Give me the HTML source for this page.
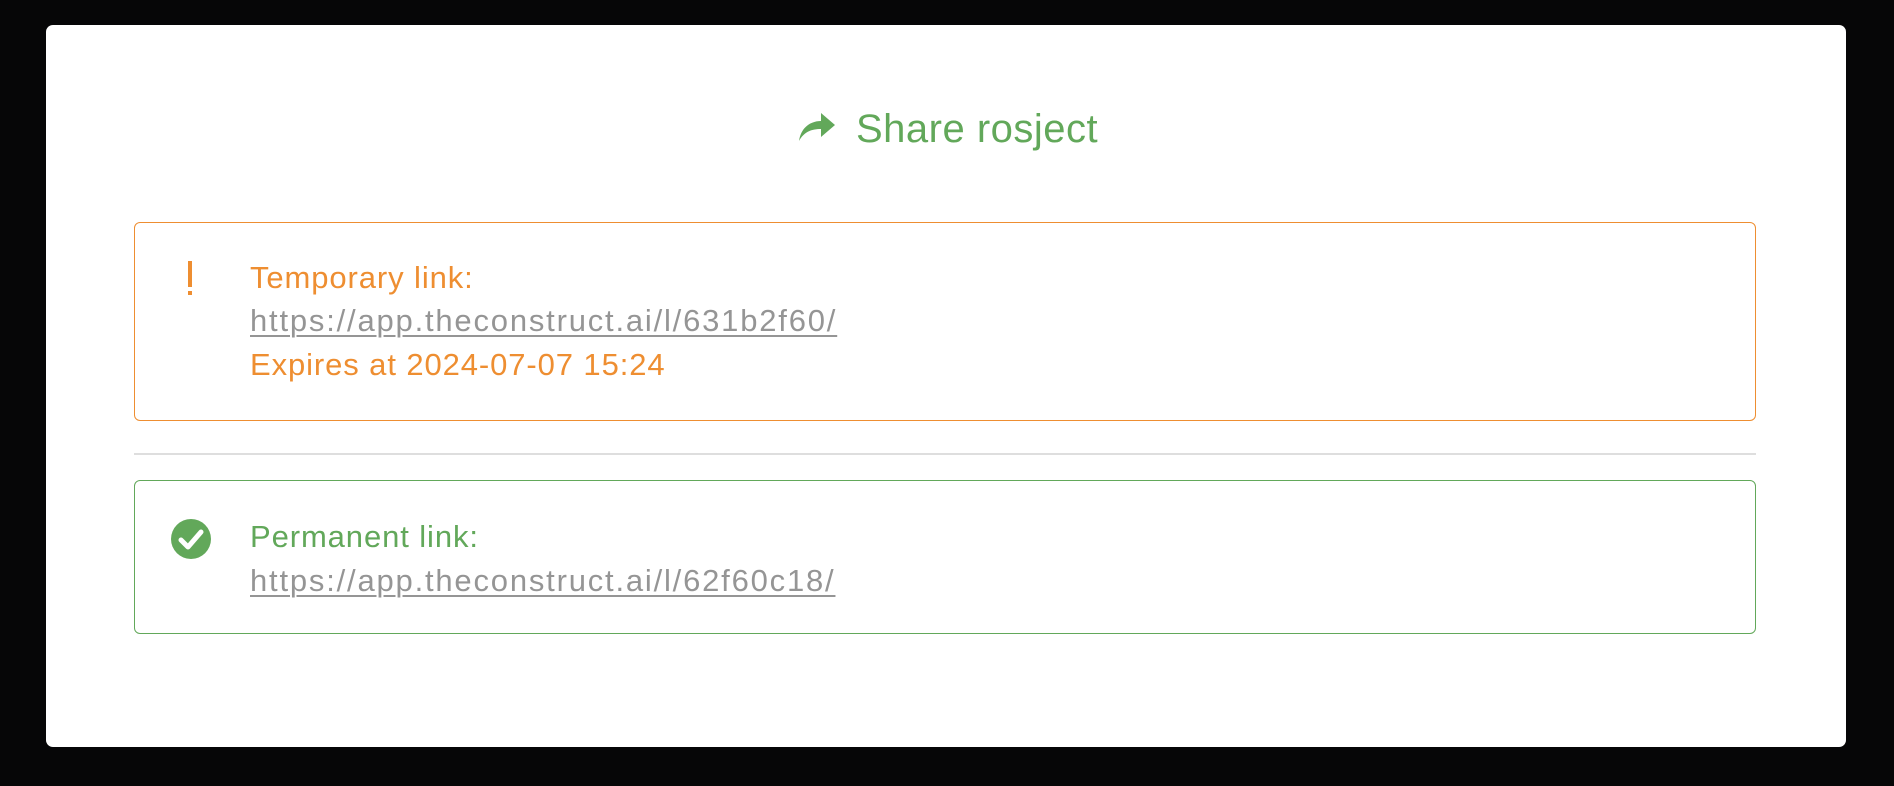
<!DOCTYPE html>
<html><head><meta charset="utf-8"><style>
html,body{margin:0;padding:0;width:1894px;height:786px;overflow:hidden;background:#060607;font-family:"Liberation Sans",sans-serif;}
.card{position:absolute;left:46px;top:25px;width:1800px;height:722px;background:#fff;border-radius:7px;}
.title{position:absolute;left:0;top:80px;width:100%;height:50px;color:#62a85a;font-size:40px;letter-spacing:0.5px;}
.title svg{position:absolute;left:751px;top:6px;}
.title span{position:absolute;left:810px;top:2px;}
.box{position:absolute;left:88px;width:1622px;border-radius:6px;box-sizing:border-box;}
.o{top:197px;height:199px;border:1.5px solid #ee8e31;}
.g{top:455px;height:154px;border:1.5px solid #62a85a;}
.line{position:absolute;left:115px;font-size:31px;letter-spacing:0.9px;white-space:nowrap;line-height:36px;}
.lnk{color:#959595;letter-spacing:1.8px;text-decoration:underline;text-decoration-thickness:2px;text-underline-offset:4px;}
.div{position:absolute;left:88px;top:428px;width:1622px;height:2px;background:#dedede;}
</style></head><body>
<div class="card">
 <div class="title">
  <svg width="40" height="32" viewBox="0 0 40 32"><path d="M2 30 C4 16 14 10 24 10 L24 2 L38 14 L24 26 L24 18 C14 18 7 21 2 30 Z" fill="#62a85a"/></svg>
  <span>Share rosject</span>
 </div>
 <div class="box o">
  <div style="position:absolute;left:53px;top:38px;width:4px;height:26px;background:#ee8e31;"></div>
  <div style="position:absolute;left:53px;top:68px;width:4px;height:4px;background:#ee8e31;"></div>
  <div class="line" style="top:37px;color:#ee8e31;">Temporary link:</div>
  <div class="line lnk" style="top:80px;">https://app.theconstruct.ai/l/631b2f60/</div>
  <div class="line" style="top:124px;color:#ee8e31;">Expires at 2024-07-07 15:24</div>
 </div>
 <div class="div"></div>
 <div class="box g">
  <svg style="position:absolute;left:35px;top:37px" width="42" height="42" viewBox="0 0 42 42"><circle cx="21" cy="21" r="20" fill="#62a85a"/><path d="M11 22 L18 29 L31 14" stroke="#fff" stroke-width="5" fill="none" stroke-linecap="round" stroke-linejoin="round"/></svg>
  <div class="line" style="top:38px;color:#62a85a;">Permanent link:</div>
  <div class="line lnk" style="top:82px;">https://app.theconstruct.ai/l/62f60c18/</div>
 </div>
</div>
</body></html>
